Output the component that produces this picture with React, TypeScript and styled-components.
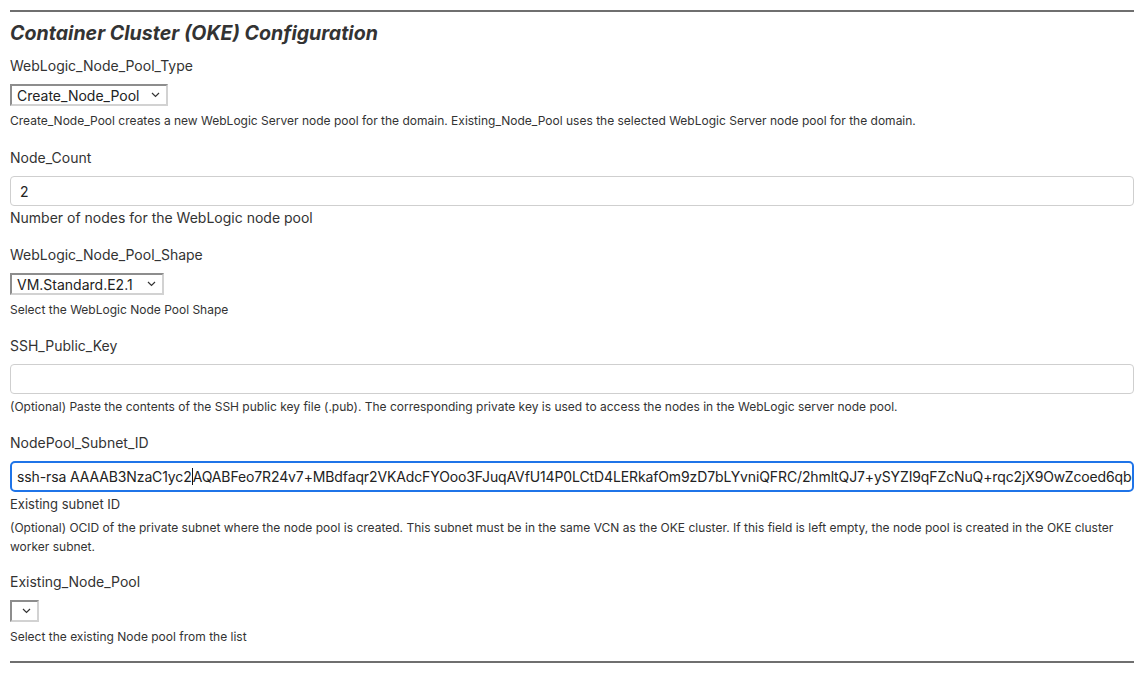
import React from 'react';
import styled, { createGlobalStyle } from 'styled-components';

const GlobalStyle = createGlobalStyle`
  body {
    margin: 0;
    background: #fff;
    font-family: Inter, "Noto Sans", sans-serif;
    color: #333;
  }
`;

const Page = styled.div`
  width: 1124px;
  padding: 10px 9px 0 10px;
`;

const Rule = styled.hr<{ $top?: number }>`
  margin: ${(p) => p.$top ?? 0}px 0 0;
  border: 0;
  border-top: 2px solid #6f6f6f;
  height: 0;
`;

const Title = styled.h2`
  margin: 9px 0 11px;
  font-size: 19.6px;
  line-height: 24px;
  font-weight: 700;
  font-style: italic;
  color: #333;
`;

const Field = styled.div<{ $after?: number }>`
  margin-bottom: ${(p) => p.$after ?? 18}px;
`;

const Label = styled.div`
  font-size: 14px;
  line-height: 20px;
  margin-bottom: 8px;
`;

const Hint = styled.div<{ $size?: number; $gap?: number }>`
  font-size: ${(p) => p.$size ?? 12}px;
  line-height: ${(p) => (p.$size ?? 12) + 4}px;
  margin-top: ${(p) => p.$gap ?? 7}px;
`;

const Note = styled.div`
  font-size: 12px;
  line-height: 19px;
  margin-top: 5px;
  padding-right: 10px;
`;

const SelectBox = styled.div<{ $width: number }>`
  display: flex;
  align-items: center;
  justify-content: space-between;
  box-sizing: border-box;
  width: ${(p) => p.$width}px;
  height: 22px;
  padding: 0 6px 0 5px;
  border: 2px solid;
  border-color: #8d8d8d #d2d2d2 #d2d2d2 #8d8d8d;
  font-size: 14px;
  color: #222;
  background: #fff;
`;

const TextBox = styled.div<{ $focused?: boolean }>`
  box-sizing: border-box;
  height: 30px;
  display: flex;
  align-items: center;
  padding: 0 9px;
  border: 1px solid #cfcfcf;
  border-radius: 4px;
  font-size: 14px;
  color: #222;
  white-space: nowrap;
  overflow: hidden;

  ${(p) =>
    p.$focused &&
    `
    height: 31px;
    padding: 0 5px;
    border: 2px solid #1f74e8;
    border-radius: 5px;
    letter-spacing: -0.12px;
  `}
`;

const Caret = styled.span`
  display: inline-block;
  width: 0;
  height: 17px;
  border-left: 1px solid #111;
  vertical-align: middle;
`;

const Chevron = () => (
  <svg width="9" height="6" viewBox="0 0 9 6" fill="none">
    <path d="M1 1l3.5 3.5L8 1" stroke="#333" strokeWidth="1.2" />
  </svg>
);

const Select: React.FC<{ value?: string; width: number }> = ({ value, width }) => (
  <SelectBox $width={width}>
    <span>{value}</span>
    <Chevron />
  </SelectBox>
);

const App: React.FC = () => {
  return (
    <>
      <GlobalStyle />
      <Page>
        <Rule />
        <Title>Container Cluster (OKE) Configuration</Title>

        <Field $after={19}>
          <Label>WebLogic_Node_Pool_Type</Label>
          <Select value="Create_Node_Pool" width={158} />
          <Hint>
            Create_Node_Pool creates a new WebLogic Server node pool for the domain. Existing_Node_Pool uses the
            selected WebLogic Server node pool for the domain.
          </Hint>
        </Field>

        <Field>
          <Label>Node_Count</Label>
          <TextBox>2</TextBox>
          <Hint $size={14} $gap={3}>Number of nodes for the WebLogic node pool</Hint>
        </Field>

        <Field>
          <Label>WebLogic_Node_Pool_Shape</Label>
          <Select value="VM.Standard.E2.1" width={154} />
          <Hint>Select the WebLogic Node Pool Shape</Hint>
        </Field>

        <Field>
          <Label>SSH_Public_Key</Label>
          <TextBox />
          <Hint $gap={5}>
            (Optional) Paste the contents of the SSH public key file (.pub). The corresponding private key is used to
            access the nodes in the WebLogic server node pool.
          </Hint>
        </Field>

        <Field $after={16}>
          <Label>NodePool_Subnet_ID</Label>
          <TextBox $focused>
            ssh-rsa AAAAB3NzaC1yc2
            <Caret />
            AQABFeo7R24v7+MBdfaqr2VKAdcFYOoo3FJuqAVfU14P0LCtD4LERkafOm9zD7bLYvniQFRC/2hmltQJ7+ySYZI9qFZcNuQ+rqc2jX9OwZcoed6qbc0Kx3Dq
          </TextBox>
          <Hint $size={13} $gap={4}>Existing subnet ID</Hint>
          <Note>
            (Optional) OCID of the private subnet where the node pool is created. This subnet must be in the same VCN
            as the OKE cluster. If this field is left empty, the node pool is created in the OKE cluster worker subnet.
          </Note>
        </Field>

        <Field $after={0}>
          <Label>Existing_Node_Pool</Label>
          <Select width={29} />
          <Hint>Select the existing Node pool from the list</Hint>
        </Field>

        <Rule $top={16} />
      </Page>
    </>
  );
};

export default App;
